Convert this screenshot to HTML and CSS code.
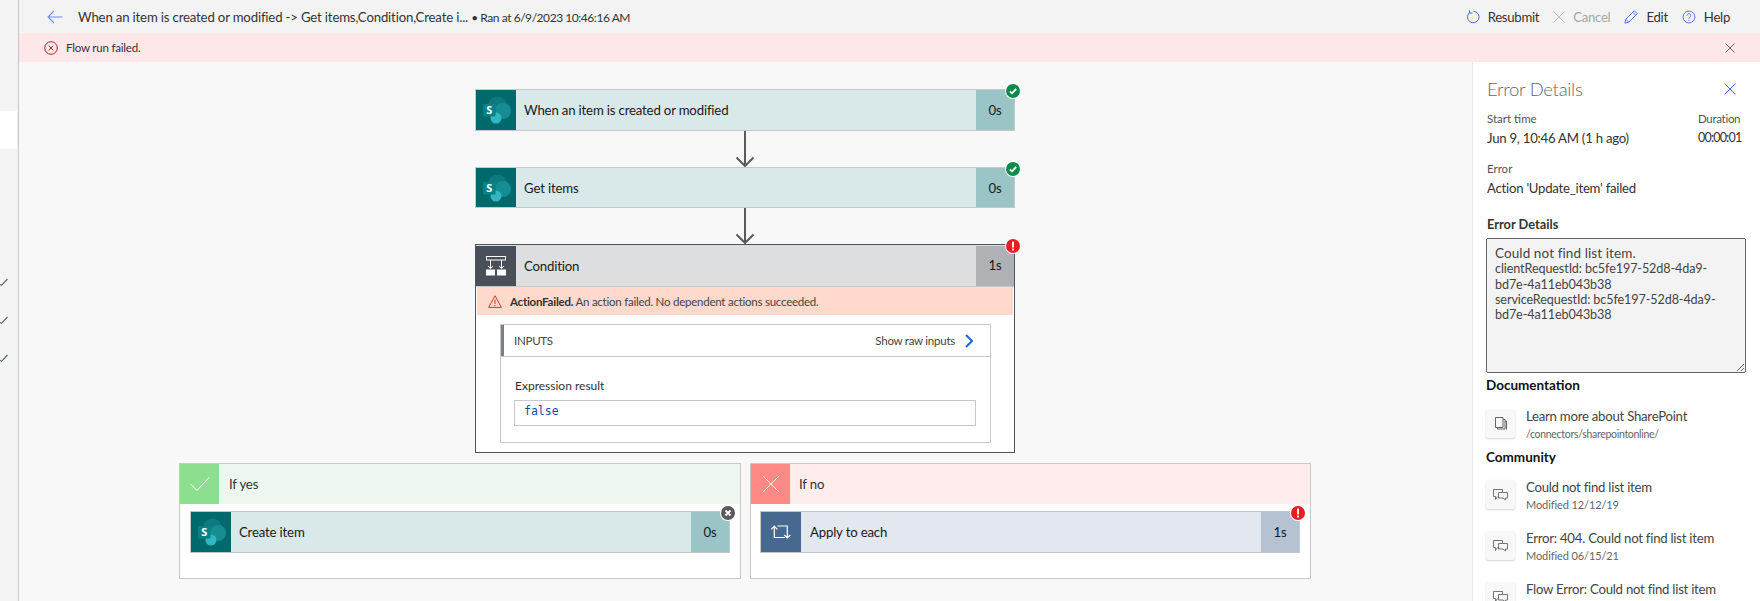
FILE: index.html
```html
<!DOCTYPE html>
<html lang="en">
<head>
<meta charset="utf-8">
<title>Flow run</title>
<link rel="stylesheet" href="styles.css">
</head>
<body>
<svg class="defs" width="0" height="0" aria-hidden="true">
  <symbol id="sp" viewBox="0 0 40 40">
    <circle cx="21.500" cy="16" r="9.500" fill="#0d7a7f"/>
    <circle cx="27" cy="21" r="8" fill="#158d93"/>
    <circle cx="20" cy="28" r="5.500" fill="#2fb8c2"/>
    <rect x="7" y="14" width="12.500" height="12.500" rx="1" fill="#038387"/>
  </symbol>
  <symbol id="ok" viewBox="0 0 16 16">
    <circle cx="8" cy="8" r="8" fill="#fff"/>
    <circle cx="8" cy="8" r="7" fill="#0e8a4c"/>
    <path d="M4.800 8.300l2.200 2 4.200-4.300" fill="none" stroke="#fff" stroke-width="1.800"/>
  </symbol>
  <symbol id="err" viewBox="0 0 16 16">
    <circle cx="8" cy="8" r="8" fill="#fff"/>
    <circle cx="8" cy="8" r="7" fill="#ec1c24"/>
    <rect x="7" y="3.500" width="2" height="6" rx=".6" fill="#fff"/>
    <rect x="7" y="10.500" width="2" height="2" rx=".6" fill="#fff"/>
  </symbol>
  <symbol id="chat" viewBox="0 0 15 12">
    <path d="M9.500 3V.5H.5V7.500H2.500V10.500L4.500 7.500" fill="none" stroke="#666" stroke-width=".9"/>
    <path d="M5.500 3.500H14.500V9H12.500V11L10 9H5.500Z" fill="none" stroke="#666" stroke-width=".9"/>
  </symbol>
  <symbol id="arrow" viewBox="0 0 20 36">
    <path d="M10 0v35M1.500 26.500L10 35l8.500-8.500" fill="none" stroke="#5a5a5a" stroke-width="2"/>
  </symbol>
</svg>

<div class="rail">
  <div class="rail-selected"></div>
  <ul class="rail-list">
    <li><svg class="rail-check" viewBox="0 0 8 8"><path d="M0 6.500l1.500 .8L7.500 1" fill="none" stroke="#4f6070" stroke-width="1.100"/></svg></li>
    <li><svg class="rail-check" viewBox="0 0 8 8"><path d="M0 6.500l1.500 .8L7.500 1" fill="none" stroke="#4f6070" stroke-width="1.100"/></svg></li>
    <li><svg class="rail-check" viewBox="0 0 8 8"><path d="M0 6.500l1.500 .8L7.500 1" fill="none" stroke="#4f6070" stroke-width="1.100"/></svg></li>
  </ul>
</div>

<div class="main">
  <header class="topbar">
    <svg class="back" viewBox="0 0 16 14"><path d="M15.500 7H1M7 1L1 7l6 6" fill="none" stroke="#6f8ff5" stroke-width="1.100"/></svg>
    <div class="run-title">When an item is created or modified -&gt; Get items,Condition,Create i... <span class="ran">• Ran at 6/9/2023 10:46:16 AM</span></div>
    <nav class="actions">
      <span class="action">
        <svg class="ico" viewBox="0 0 16 16"><path d="M4.800 2.400A6.600 6.600 0 1 0 8.500 1.400" fill="none" stroke="#3f6be8" stroke-width="1.100"/><path d="M4 .3v3.200h3.400" fill="none" stroke="#3f6be8" stroke-width="1.100"/></svg>
        Resubmit
      </span>
      <span class="action off">
        <svg class="ico ico-x" viewBox="0 0 12 12"><path d="M.5 .5l11 11M11.500 .5l-11 11" fill="none" stroke="#bdbdbd" stroke-width="1"/></svg>
        Cancel
      </span>
      <span class="action">
        <svg class="ico" viewBox="0 0 16 16"><path d="M1 15l1-4.500L11.800 .8l3.400 3.400L5.500 14zM2 10.500L5.500 14M10 2.600l3.400 3.400" fill="none" stroke="#3f6be8" stroke-width="1"/></svg>
        Edit
      </span>
      <span class="action">
        <svg class="ico" viewBox="0 0 16 16"><circle cx="8" cy="8" r="6.800" fill="none" stroke="#3f6be8" stroke-width="1"/><path d="M5.900 6.300a2.100 2.100 0 1 1 3.300 1.700c-.8.5-1.200 1-1.200 1.900" fill="none" stroke="#3f6be8" stroke-width="1"/><circle cx="8" cy="11.700" r=".7" fill="#3f6be8"/></svg>
        Help
      </span>
    </nav>
  </header>

  <div class="banner">
    <svg class="banner-ico" viewBox="0 0 14 14"><circle cx="7" cy="7" r="6.300" fill="none" stroke="#a4262c" stroke-width="1"/><path d="M4.700 4.700l4.600 4.600M9.300 4.700l-4.600 4.600" fill="none" stroke="#a4262c" stroke-width="1"/></svg>
    <span class="banner-text">Flow run failed.</span>
    <svg class="banner-close" viewBox="0 0 10 10"><path d="M.5 .5l9 9M9.500 .5l-9 9" fill="none" stroke="#666" stroke-width="1"/></svg>
  </div>

  <div class="content">
    <main class="canvas">
      <div class="card sp">
        <div class="tile"><svg class="tile-art"><use href="#sp"/></svg><span class="sp-s">S</span></div>
        <div class="label">When an item is created or modified</div>
        <div class="dur">0s</div>
        <svg class="badge"><use href="#ok"/></svg>
      </div>
      <svg class="link"><use href="#arrow"/></svg>
      <div class="card sp short">
        <div class="tile"><svg class="tile-art"><use href="#sp"/></svg><span class="sp-s">S</span></div>
        <div class="label">Get items</div>
        <div class="dur">0s</div>
        <svg class="badge"><use href="#ok"/></svg>
      </div>
      <svg class="link"><use href="#arrow"/></svg>

      <div class="cond">
        <div class="cond-head">
          <div class="cond-tile">
            <svg class="cond-ico" viewBox="0 0 20 20"><rect x=".5" y=".5" width="19" height="3.500" fill="none" stroke="#fff" stroke-width="1"/><path d="M4.500 4v8.500M15.500 4v8.500M2 10l2.500 2.500L7 10M13 10l2.500 2.500L18 10" fill="none" stroke="#fff" stroke-width="1"/><rect x="0" y="13.500" width="9" height="6" fill="#fff"/><rect x="11" y="13.500" width="9" height="6" fill="#fff"/></svg>
          </div>
          <div class="label">Condition</div>
          <div class="dur dur-cond">1s</div>
        </div>
        <svg class="badge"><use href="#err"/></svg>
        <div class="alert">
          <svg class="alert-ico" viewBox="0 0 14 13"><path d="M7 .8l6.400 11.600H.6zM7 4.500v4.500M7 10v1.200" fill="none" stroke="#d83b2b" stroke-width="1"/></svg>
          <span><b>ActionFailed.</b> An action failed. No dependent actions succeeded.</span>
        </div>
        <div class="inputs">
          <div class="inputs-head">
            <span class="inputs-title">INPUTS</span>
            <span class="raw">Show raw inputs</span>
            <svg class="chev" viewBox="0 0 9 14"><path d="M1 1l6 6-6 6" fill="none" stroke="#1a66e0" stroke-width="2"/></svg>
          </div>
          <div class="inputs-body">
            <div class="expr">Expression result</div>
            <div class="value">false</div>
          </div>
        </div>
      </div>

      <div class="branches">
        <section class="branch yes">
          <div class="branch-head">
            <div class="branch-tile"><svg class="branch-ico" viewBox="0 0 20 16"><path d="M.5 8l6.500 6.500L19.500 1" fill="none" stroke="#fff" stroke-width="1"/></svg></div>
            <span>If yes</span>
          </div>
          <div class="card sp">
            <div class="tile"><svg class="tile-art"><use href="#sp"/></svg><span class="sp-s">S</span></div>
            <div class="label">Create item</div>
            <div class="dur">0s</div>
            <svg class="badge" viewBox="0 0 16 16"><circle cx="8" cy="8" r="8" fill="#fff"/><circle cx="8" cy="8" r="7" fill="#5a5a5a"/><path d="M5.500 5.500l5 5M10.500 5.500l-5 5" fill="none" stroke="#fff" stroke-width="1.800"/></svg>
          </div>
        </section>
        <section class="branch no">
          <div class="branch-head">
            <div class="branch-tile"><svg class="branch-ico" viewBox="0 0 16 16"><path d="M.5 .5l15 15M15.500 .5l-15 15" fill="none" stroke="#fff" stroke-width="1"/></svg></div>
            <span>If no</span>
          </div>
          <div class="card loop">
            <div class="loop-tile"><svg class="loop-ico" viewBox="0 0 20 14"><path d="M.3 4.300L3.300 1.200 6.300 4.300M3.300 1.500V12.500H14M6.500 1H16.300V13M13.300 10l3 3 3-3" fill="none" stroke="#fff" stroke-width="1.200"/></svg></div>
            <div class="label">Apply to each</div>
            <div class="dur">1s</div>
            <svg class="badge"><use href="#err"/></svg>
          </div>
        </section>
      </div>
    </main>

    <aside class="panel">
      <div class="panel-title">
        <h1>Error Details</h1>
        <svg class="panel-close" viewBox="0 0 12 12"><path d="M.5 .5l11 11M11.500 .5l-11 11" fill="none" stroke="#3f6be8" stroke-width="1"/></svg>
      </div>
      <div class="meta">
        <div>
          <div class="meta-label">Start time</div>
          <div class="meta-value">Jun 9, 10:46 AM (1 h ago)</div>
        </div>
        <div class="meta-right">
          <div class="meta-label dur-label">Duration</div>
          <div class="meta-value clock">00:00:01</div>
        </div>
      </div>
      <div class="meta-label gap">Error</div>
      <div class="meta-value">Action 'Update_item' failed</div>
      <h2 class="sub-head">Error Details</h2>
      <div class="errbox">Could not find list item.<br><span class="id">clientRequestId: bc5fe197-52d8-4da9-<br>bd7e-4a11eb043b38<br>serviceRequestId: bc5fe197-52d8-4da9-<br>bd7e-4a11eb043b38</span></div>
      <h2 class="sec doc-head">Documentation</h2>
      <div class="res first">
        <div class="res-tile"><svg class="doc-ico" viewBox="0 0 12 13"><path d="M.5 .5h7.500v10H.5zM8 2.500h2V12H2.500v-1.500M10 4h1.500v8.500" fill="none" stroke="#666" stroke-width="1"/></svg></div>
        <div><div class="res-name">Learn more about SharePoint</div><div class="res-sub path">/connectors/sharepointonline/</div></div>
      </div>
      <h2 class="sec">Community</h2>
      <div class="res first-c">
        <div class="res-tile"><svg class="res-ico"><use href="#chat"/></svg></div>
        <div><div class="res-name">Could not find list item</div><div class="res-sub">Modified 12/12/19</div></div>
      </div>
      <div class="res">
        <div class="res-tile"><svg class="res-ico"><use href="#chat"/></svg></div>
        <div><div class="res-name">Error: 404. Could not find list item</div><div class="res-sub">Modified 06/15/21</div></div>
      </div>
      <div class="res">
        <div class="res-tile"><svg class="res-ico"><use href="#chat"/></svg></div>
        <div><div class="res-name">Flow Error: Could not find list item</div></div>
      </div>
    </aside>
  </div>
</div>
</body>
</html>
```

FILE: styles.css
```css
* { box-sizing: border-box; }
html, body { height: 601px; }
body {
  margin: 0;
  display: flex;
  overflow: hidden;
  font-family: "Lato", "Open Sans", sans-serif;
  font-size: 13.2px;
  letter-spacing: -0.17px;
  color: #222;
  background: #f8f8f8;
}
.defs { position: absolute; }

.rail {
  flex: 0 0 19px;
  height: 601px;
  background: #f3f3f3;
  border-right: 1px solid #c8c8c8;
  padding-top: 111px;
}
.rail-selected { height: 38px; background: #fff; margin-right: 1px; }
.rail-list { list-style: none; margin: 129px 0 0; padding: 0; }
.rail-list li { height: 38px; }
.rail-check { display: block; width: 8px; height: 8px; }

.main { flex: 1; min-width: 0; height: 601px; display: flex; flex-direction: column; }

.topbar {
  flex: 0 0 33px;
  display: flex;
  align-items: center;
  background: #f3f3f3;
  padding-left: 28px;
}
.back { width: 16px; height: 14px; }
.run-title { margin-left: 15px; color: #333; white-space: nowrap; }
.ran { font-size: 12px; letter-spacing: -0.45px; }
.actions { margin-left: auto; display: flex; padding-right: 30px; letter-spacing: -0.3px; }
.action { display: flex; align-items: center; gap: 8px; margin-left: 14px; color: #333; }
.action.off { color: #a6a6a6; }
.ico { width: 14px; height: 14px; }
.ico-x { width: 12px; height: 12px; }

.banner {
  flex: 0 0 29px;
  display: flex;
  align-items: center;
  background: #fde7e9;
  padding: 0 25px 0 25px;
}
.banner-ico { width: 14px; height: 14px; }
.banner-text { margin-left: 8px; font-size: 11.5px; letter-spacing: -0.2px; color: #333; }
.banner-close { width: 10px; height: 10px; margin-left: auto; }

.content { flex: 1; min-height: 0; display: flex; }
.canvas {
  flex: 1;
  min-width: 0;
  display: flex;
  flex-direction: column;
  align-items: center;
  padding: 27px 1px 0 0;
}

.card {
  position: relative;
  flex: none;
  width: 540px;
  height: 42px;
  display: flex;
  border: 1px solid #c8c8c8;
}
.card.short { height: 41px; }
.card.sp { background: #d9e8e8; }
.card.loop { background: #e3e7ef; }
.tile { position: relative; flex: none; width: 40px; background: #00696b; }
.tile-art { display: block; width: 40px; height: 40px; }
.sp-s {
  position: absolute;
  left: 7px;
  top: 14px;
  width: 12.5px;
  text-align: center;
  font: 700 11px/12.5px "Open Sans", sans-serif;
  letter-spacing: 0;
  color: #fff;
}
.label { flex: 1; padding-left: 8px; line-height: 40px; color: #1a1a1a; }
.loop .label { padding-left: 9px; }
.dur { flex: none; width: 38px; text-align: center; line-height: 40px; color: #1a1a1a; background: #9bc4c6; }
.loop .dur { background: #b4c2d1; }
.badge { position: absolute; top: -7px; right: -7px; width: 16px; height: 16px; }
.link { flex: none; display: block; width: 20px; height: 36px; }

.cond {
  position: relative;
  flex: none;
  width: 540px;
  height: 209px;
  background: #fff;
  border: 1px solid #4d535b;
}
.cond-head {
  display: flex;
  height: 42px;
  background: #dcdee0;
  padding-top: 1px;
  border-bottom: 1px solid #c8c8c8;
  align-items: stretch;
}
.cond-tile {
  flex: none;
  width: 40px;
  background: #484f58;
  display: flex;
  align-items: center;
  justify-content: center;
}
.cond-ico { width: 20px; height: 20px; }
.cond-head .label { line-height: 41px; }
.dur-cond { background: #aeb2b5; line-height: 39px; }
.alert {
  height: 28px;
  margin: 0 1px;
  display: flex;
  align-items: center;
  background: #fed9cc;
  padding-left: 11px;
  font-size: 11.5px;
  letter-spacing: -0.24px;
  color: #444;
}
.alert b { color: #333; }
.alert-ico { width: 14px; height: 13px; margin-right: 8px; }
.inputs { margin: 9px 23px 0 24px; height: 119px; border: 1px solid #c8c8c8; }
.inputs-head {
  height: 32px;
  display: flex;
  align-items: center;
  border-bottom: 1px solid #c8c8c8;
  padding: 0 16px 0 13px;
  box-shadow: inset 3px 0 0 #7a7f87;
  font-size: 11.5px;
  letter-spacing: -0.25px;
  color: #444;
}
.raw { margin-left: auto; }
.chev { width: 9px; height: 14px; margin-left: 10px; }
.inputs-body { padding: 21px 14px 0 13px; }
.expr { padding-left: 1px; font-size: 12px; line-height: 16px; letter-spacing: 0; color: #333; }
.value {
  margin-top: 6px;
  height: 26px;
  border: 1px solid #c8c8c8;
  padding-left: 9px;
  font: 11.5px/20px "DejaVu Sans Mono", monospace;
  letter-spacing: 0;
  color: #0451a5;
}

.branches { margin-top: 10px; display: grid; grid-template-columns: 562px 561px; gap: 9px; }
.branch { height: 116px; background: #fff; border: 1px solid #c8c8c8; }
.branch-head { display: flex; align-items: center; height: 40px; margin-bottom: 7px; gap: 10px; color: #333; }
.no .branch-head { gap: 9px; }
.branch-tile { flex: none; width: 39px; height: 40px; display: flex; align-items: center; justify-content: center; }
.yes .branch-head { background: #edf7ef; }
.yes .branch-tile { background: #8cdf8f; }
.no .branch-head { background: #ffeded; }
.no .branch-tile { background: #ff8a85; }
.branch-ico { width: 20px; height: 16px; }
.no .branch-ico { width: 16px; height: 16px; }
.branch .card { margin-left: 10px; }
.no .card { margin-left: 9px; }
.loop-tile { flex: none; width: 40px; display: flex; align-items: center; justify-content: center; background: #47688f; }
.loop-ico { width: 20px; height: 14px; }

.panel {
  flex: 0 0 288px;
  background: #fff;
  border-left: 1px solid #ebebeb;
  padding: 13px 14px 0 13px;
  overflow: hidden;
}
.panel-title { display: flex; align-items: center; justify-content: space-between; height: 28px; padding: 0 10px 0 1px; }
.panel-title h1 { margin: 0; font-size: 18.5px; font-weight: 300; letter-spacing: -0.3px; color: #666; }
.panel-close { width: 12px; height: 12px; }
.meta { display: flex; justify-content: space-between; margin-top: 8px; padding-right: 1px; }
.meta-right { width: 48px; }
.meta-label { padding-left: 1px; font-size: 11.5px; line-height: 16px; letter-spacing: 0; color: #555; }
.dur-label { letter-spacing: -0.3px; }
.meta-value { padding-left: 1px; margin-top: 2px; line-height: 18px; letter-spacing: -0.25px; color: #333; white-space: nowrap; }
.clock { font-size: 12.5px; letter-spacing: -0.8px; }
.gap { margin-top: 14px; }
.sub-head { margin: 18px 0 5px; padding-left: 1px; font-size: 12.8px; line-height: 18px; font-weight: 700; letter-spacing: 0; color: #333; }
.errbox {
  width: 260px;
  height: 135px;
  resize: both;
  overflow: auto;
  border: 1px solid #666;
  border-radius: 2px;
  background: #f3f3f3;
  padding: 7px 8px;
  font-size: 13.5px;
  line-height: 15.3px;
  letter-spacing: 0.1px;
  white-space: nowrap;
  color: #444;
}
.id { font-size: 12.6px; letter-spacing: -0.1px; }
.sec { margin: 6px 0 0; font-size: 13.5px; line-height: 18px; font-weight: 700; letter-spacing: 0; color: #111; }
.doc-head { margin-top: 3px; }
.res { display: flex; gap: 11px; height: 35px; margin-top: 16px; }
.res.first { margin-top: 13px; }
.res.first-c { margin-top: 12px; }
.res-tile {
  flex: none;
  width: 29px;
  height: 29px;
  margin-top: 2px;
  display: flex;
  align-items: center;
  justify-content: center;
  background: #f8f8f8;
  box-shadow: 0 1px 2px rgba(0,0,0,.18);
  border-radius: 2px;
}
.res-ico { width: 15px; height: 12px; }
.doc-ico { width: 12px; height: 13px; }
.res-name { line-height: 18px; letter-spacing: -0.25px; color: #444; white-space: nowrap; }
.res-sub { margin-top: 1px; font-size: 11px; line-height: 16px; letter-spacing: -0.1px; color: #666; white-space: nowrap; }
.res-sub.path { font-size: 10.5px; letter-spacing: -0.3px; }
```
